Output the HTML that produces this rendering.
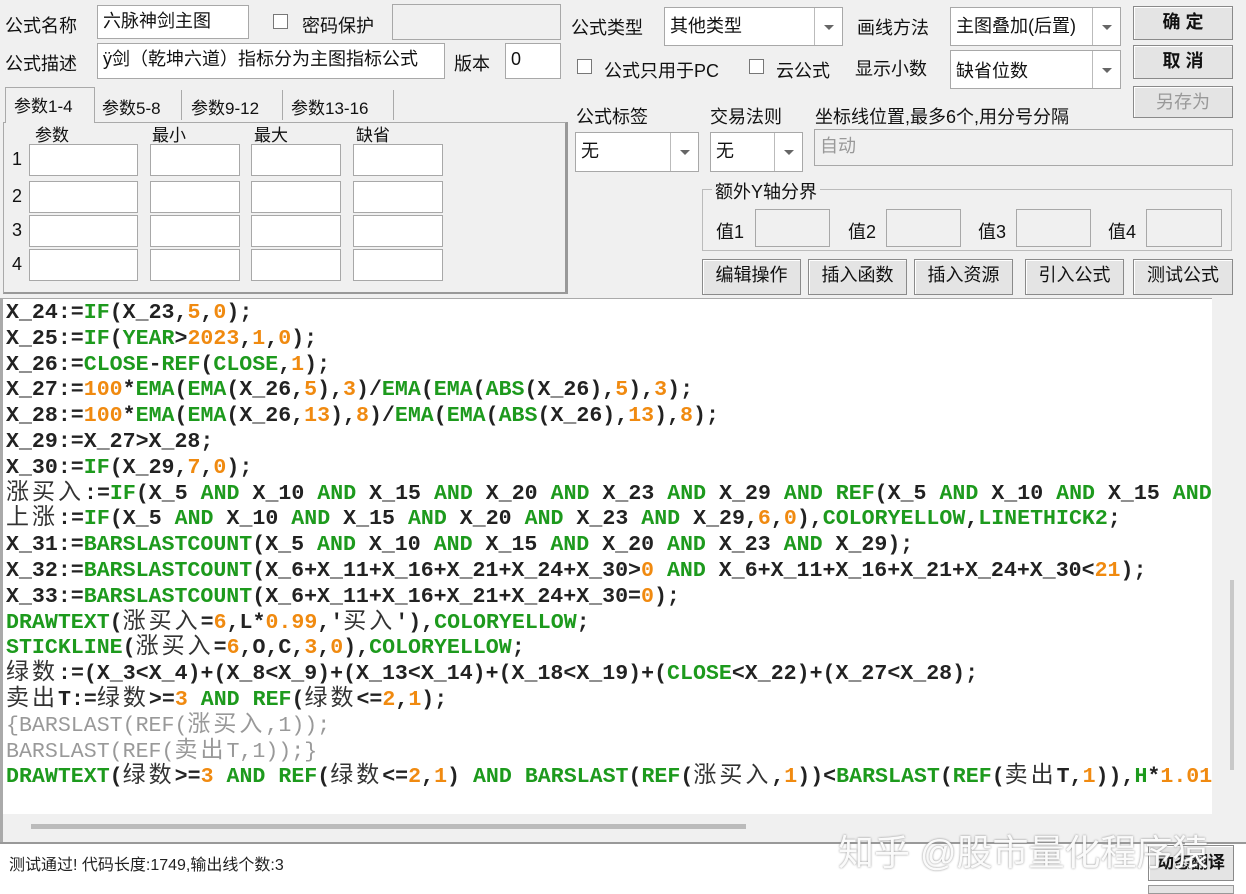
<!DOCTYPE html><html><head><meta charset="utf-8"><style>
*{box-sizing:border-box;margin:0;padding:0}
body{width:1246px;height:894px;background:#f0f0f0;position:relative;overflow:hidden;font-family:"Liberation Sans","Noto Sans CJK SC",sans-serif;font-size:18px;color:#111}
.a{position:absolute;white-space:nowrap}
.in{position:absolute;background:#fff;border:1px solid #a8a8a8;padding:2px 5px;font-size:18px;line-height:26px;white-space:nowrap;overflow:hidden}
.dis{background:#f0f0f0;color:#999}
.cb{position:absolute;width:15px;height:15px;border:1px solid #777;background:#fff}
.dd{position:absolute;top:0;right:0;bottom:0;width:28px;border-left:1px solid #bbb;background:#fff}
.dd:after{content:"";position:absolute;left:9px;top:50%;margin-top:-2px;border:5px solid transparent;border-top:5px solid #666}
.btn{position:absolute;border:1px solid #8a8a8a;background:#e4e4e4;text-align:center;font-size:18px;line-height:30px;box-shadow:inset 1px 1px 0 #fff}
.code{position:absolute;left:0;top:298px;width:1212px;height:516px;background:#fff;border-left:3px solid #aaa;border-top:1px solid #aaa;font-family:"Liberation Mono","Noto Sans CJK SC",monospace;font-weight:bold;font-size:21.6px;padding-top:2px;padding-left:3px;color:#222;overflow:hidden;white-space:pre}
.code div{height:25.8px;line-height:25.8px;overflow:visible}
.g{color:#1d9a1d}.o{color:#f08a10}.m{color:#999;font-weight:normal}
.c{font-family:"Noto Sans CJK SC",sans-serif;font-weight:normal;font-size:23px;letter-spacing:3px;color:#333;line-height:10px;display:inline-block}
</style></head><body>
<div class="a" style="left:5px;top:12px">公式名称</div>
<div class="in" style="left:97px;top:5px;width:152px;height:34px">六脉神剑主图</div>
<div class="cb" style="left:273px;top:14px"></div>
<div class="a" style="left:302px;top:12px">密码保护</div>
<div class="in dis" style="left:392px;top:4px;width:169px;height:36px"></div>
<div class="a" style="left:5px;top:50px">公式描述</div>
<div class="in" style="left:97px;top:43px;width:348px;height:36px">ÿ剑（乾坤六道）指标分为主图指标公式</div>
<div class="a" style="left:454px;top:50px">版本</div>
<div class="in" style="left:505px;top:43px;width:56px;height:36px">0</div>
<div class="a" style="left:5px;top:87px;width:90px;height:36px;border:1px solid #aaa;border-bottom:none;background:#f0f0f0;padding:4px 8px;font-size:17px;z-index:2">参数1-4</div>
<div class="a" style="left:96px;top:90px;width:86px;height:30px;border-right:1px solid #aaa;padding:4px 6px;font-size:17px">参数5-8</div>
<div class="a" style="left:183px;top:90px;width:100px;height:30px;border-right:1px solid #aaa;padding:4px 8px;font-size:17px">参数9-12</div>
<div class="a" style="left:284px;top:90px;width:110px;height:30px;border-right:1px solid #aaa;padding:4px 7px;font-size:17px">参数13-16</div>
<div class="a" style="left:3px;top:122px;width:564px;height:172px;border:1px solid #aaa;border-right:2px solid #999;border-bottom:2px solid #999"></div>
<div class="a" style="left:35px;top:121px;font-size:17px">参数</div>
<div class="a" style="left:152px;top:121px;font-size:17px">最小</div>
<div class="a" style="left:254px;top:121px;font-size:17px">最大</div>
<div class="a" style="left:356px;top:121px;font-size:17px">缺省</div>
<div class="a" style="left:12px;top:149px">1</div><div class="a" style="left:12px;top:186px">2</div><div class="a" style="left:12px;top:220px">3</div><div class="a" style="left:12px;top:254px">4</div>
<div class="in" style="left:29px;top:144px;width:109px;height:32px"></div><div class="in" style="left:150px;top:144px;width:90px;height:32px"></div><div class="in" style="left:251px;top:144px;width:90px;height:32px"></div><div class="in" style="left:353px;top:144px;width:90px;height:32px"></div>
<div class="in" style="left:29px;top:181px;width:109px;height:32px"></div><div class="in" style="left:150px;top:181px;width:90px;height:32px"></div><div class="in" style="left:251px;top:181px;width:90px;height:32px"></div><div class="in" style="left:353px;top:181px;width:90px;height:32px"></div>
<div class="in" style="left:29px;top:215px;width:109px;height:32px"></div><div class="in" style="left:150px;top:215px;width:90px;height:32px"></div><div class="in" style="left:251px;top:215px;width:90px;height:32px"></div><div class="in" style="left:353px;top:215px;width:90px;height:32px"></div>
<div class="in" style="left:29px;top:249px;width:109px;height:32px"></div><div class="in" style="left:150px;top:249px;width:90px;height:32px"></div><div class="in" style="left:251px;top:249px;width:90px;height:32px"></div><div class="in" style="left:353px;top:249px;width:90px;height:32px"></div>
<div class="a" style="left:571px;top:14px">公式类型</div>
<div class="in" style="left:664px;top:7px;width:179px;height:39px;line-height:32px">其他类型<div class="dd"></div></div>
<div class="a" style="left:857px;top:14px">画线方法</div>
<div class="in" style="left:950px;top:7px;width:171px;height:39px;line-height:32px">主图叠加(后置)<div class="dd"></div></div>
<div class="cb" style="left:577px;top:59px"></div>
<div class="a" style="left:604px;top:57px">公式只用于PC</div>
<div class="cb" style="left:749px;top:59px"></div>
<div class="a" style="left:776px;top:57px">云公式</div>
<div class="a" style="left:855px;top:55px">显示小数</div>
<div class="in" style="left:950px;top:50px;width:171px;height:39px;line-height:36px">缺省位数<div class="dd"></div></div>
<div class="btn" style="left:1133px;top:6px;width:100px;height:34px;font-weight:bold">确 定</div>
<div class="btn" style="left:1133px;top:45px;width:100px;height:34px;font-weight:bold">取 消</div>
<div class="btn" style="left:1133px;top:86px;width:100px;height:32px;color:#999">另存为</div>
<div class="a" style="left:576px;top:103px">公式标签</div>
<div class="a" style="left:710px;top:103px">交易法则</div>
<div class="a" style="left:815px;top:103px">坐标线位置,最多6个,用分号分隔</div>
<div class="a" style="left:566px;top:122px;width:2px;height:172px;background:#999"></div>
<div class="in" style="left:575px;top:132px;width:124px;height:40px;line-height:32px">无<div class="dd"></div></div>
<div class="in" style="left:710px;top:132px;width:93px;height:40px;line-height:32px">无<div class="dd"></div></div>
<div class="in dis" style="left:814px;top:129px;width:419px;height:37px;line-height:28px">自动</div>
<div class="a" style="left:702px;top:189px;width:530px;height:62px;border:1px solid #bbb"></div>
<div class="a" style="left:712px;top:178px;background:#f0f0f0;padding:0 3px">额外Y轴分界</div>
<div class="a" style="left:716px;top:218px">值1</div><div class="in dis" style="left:755px;top:209px;width:75px;height:38px"></div>
<div class="a" style="left:848px;top:218px">值2</div><div class="in dis" style="left:886px;top:209px;width:75px;height:38px"></div>
<div class="a" style="left:978px;top:218px">值3</div><div class="in dis" style="left:1016px;top:209px;width:75px;height:38px"></div>
<div class="a" style="left:1108px;top:218px">值4</div><div class="in dis" style="left:1146px;top:209px;width:76px;height:38px"></div>
<div class="btn" style="left:702px;top:259px;width:99px;height:36px">编辑操作</div>
<div class="btn" style="left:808px;top:259px;width:99px;height:36px">插入函数</div>
<div class="btn" style="left:914px;top:259px;width:99px;height:36px">插入资源</div>
<div class="btn" style="left:1025px;top:259px;width:99px;height:36px">引入公式</div>
<div class="btn" style="left:1133px;top:259px;width:100px;height:36px">测试公式</div>
<div class="code"><div>X_24:=<span class="g">IF</span>(X_23,<span class="o">5</span>,<span class="o">0</span>);</div><div>X_25:=<span class="g">IF</span>(<span class="g">YEAR</span>&gt;<span class="o">2023</span>,<span class="o">1</span>,<span class="o">0</span>);</div><div>X_26:=<span class="g">CLOSE</span>-<span class="g">REF</span>(<span class="g">CLOSE</span>,<span class="o">1</span>);</div><div>X_27:=<span class="o">100</span>*<span class="g">EMA</span>(<span class="g">EMA</span>(X_26,<span class="o">5</span>),<span class="o">3</span>)/<span class="g">EMA</span>(<span class="g">EMA</span>(<span class="g">ABS</span>(X_26),<span class="o">5</span>),<span class="o">3</span>);</div><div>X_28:=<span class="o">100</span>*<span class="g">EMA</span>(<span class="g">EMA</span>(X_26,<span class="o">13</span>),<span class="o">8</span>)/<span class="g">EMA</span>(<span class="g">EMA</span>(<span class="g">ABS</span>(X_26),<span class="o">13</span>),<span class="o">8</span>);</div><div>X_29:=X_27&gt;X_28;</div><div>X_30:=<span class="g">IF</span>(X_29,<span class="o">7</span>,<span class="o">0</span>);</div><div><span class="c">涨买入</span>:=<span class="g">IF</span>(X_5 <span class="g">AND</span> X_10 <span class="g">AND</span> X_15 <span class="g">AND</span> X_20 <span class="g">AND</span> X_23 <span class="g">AND</span> X_29 <span class="g">AND</span> <span class="g">REF</span>(X_5 <span class="g">AND</span> X_10 <span class="g">AND</span> X_15 <span class="g">AND</span></div><div><span class="c">上涨</span>:=<span class="g">IF</span>(X_5 <span class="g">AND</span> X_10 <span class="g">AND</span> X_15 <span class="g">AND</span> X_20 <span class="g">AND</span> X_23 <span class="g">AND</span> X_29,<span class="o">6</span>,<span class="o">0</span>),<span class="g">COLORYELLOW</span>,<span class="g">LINETHICK2</span>;</div><div>X_31:=<span class="g">BARSLASTCOUNT</span>(X_5 <span class="g">AND</span> X_10 <span class="g">AND</span> X_15 <span class="g">AND</span> X_20 <span class="g">AND</span> X_23 <span class="g">AND</span> X_29);</div><div>X_32:=<span class="g">BARSLASTCOUNT</span>(X_6+X_11+X_16+X_21+X_24+X_30&gt;<span class="o">0</span> <span class="g">AND</span> X_6+X_11+X_16+X_21+X_24+X_30&lt;<span class="o">21</span>);</div><div>X_33:=<span class="g">BARSLASTCOUNT</span>(X_6+X_11+X_16+X_21+X_24+X_30=<span class="o">0</span>);</div><div><span class="g">DRAWTEXT</span>(<span class="c">涨买入</span>=<span class="o">6</span>,L*<span class="o">0.99</span>,'<span class="c">买入</span>'),<span class="g">COLORYELLOW</span>;</div><div><span class="g">STICKLINE</span>(<span class="c">涨买入</span>=<span class="o">6</span>,O,C,<span class="o">3</span>,<span class="o">0</span>),<span class="g">COLORYELLOW</span>;</div><div><span class="c">绿数</span>:=(X_3&lt;X_4)+(X_8&lt;X_9)+(X_13&lt;X_14)+(X_18&lt;X_19)+(<span class="g">CLOSE</span>&lt;X_22)+(X_27&lt;X_28);</div><div><span class="c">卖出</span>T:=<span class="c">绿数</span>&gt;=<span class="o">3</span> <span class="g">AND</span> <span class="g">REF</span>(<span class="c">绿数</span>&lt;=<span class="o">2</span>,<span class="o">1</span>);</div><div class="m">{BARSLAST(REF(<span class="c" style="color:#999">涨买入</span>,1));</div><div class="m">BARSLAST(REF(<span class="c" style="color:#999">卖出</span>T,1));}</div><div><span class="g">DRAWTEXT</span>(<span class="c">绿数</span>&gt;=<span class="o">3</span> <span class="g">AND</span> <span class="g">REF</span>(<span class="c">绿数</span>&lt;=<span class="o">2</span>,<span class="o">1</span>) <span class="g">AND</span> <span class="g">BARSLAST</span>(<span class="g">REF</span>(<span class="c">涨买入</span>,<span class="o">1</span>))&lt;<span class="g">BARSLAST</span>(<span class="g">REF</span>(<span class="c">卖出</span>T,<span class="o">1</span>)),<span class="g">H</span>*<span class="o">1.01</span>,</div></div>
<div class="a" style="left:1212px;top:298px;width:34px;height:516px;background:#f0f0f0"></div>
<div class="a" style="left:1230px;top:580px;width:4px;height:190px;background:#c8c8c8"></div>
<div class="a" style="left:0;top:814px;width:1212px;height:28px;background:#f0f0f0;border-left:3px solid #aaa"></div>
<div class="a" style="left:31px;top:824px;width:715px;height:5px;background:#bbb"></div>
<div class="a" style="left:0;top:842px;width:1246px;height:52px;background:#fff;border-top:2px solid #999"></div>
<div class="a" style="left:9px;top:851px;font-size:16px;color:#222">测试通过! 代码长度:1749,输出线个数:3</div>
<div class="a" style="left:838px;top:824px;font-size:36px;color:#fafafa;text-shadow:0 0 2px #888;z-index:3">知乎 @股市量化程序猿</div>
<div class="btn" style="left:1148px;top:845px;width:86px;height:36px;font-size:17px;font-weight:bold;line-height:34px">动态翻译</div>
<div class="a" style="left:1148px;top:885px;width:86px;height:9px;border:1px solid #999;background:#e4e4e4"></div>
</body></html>
